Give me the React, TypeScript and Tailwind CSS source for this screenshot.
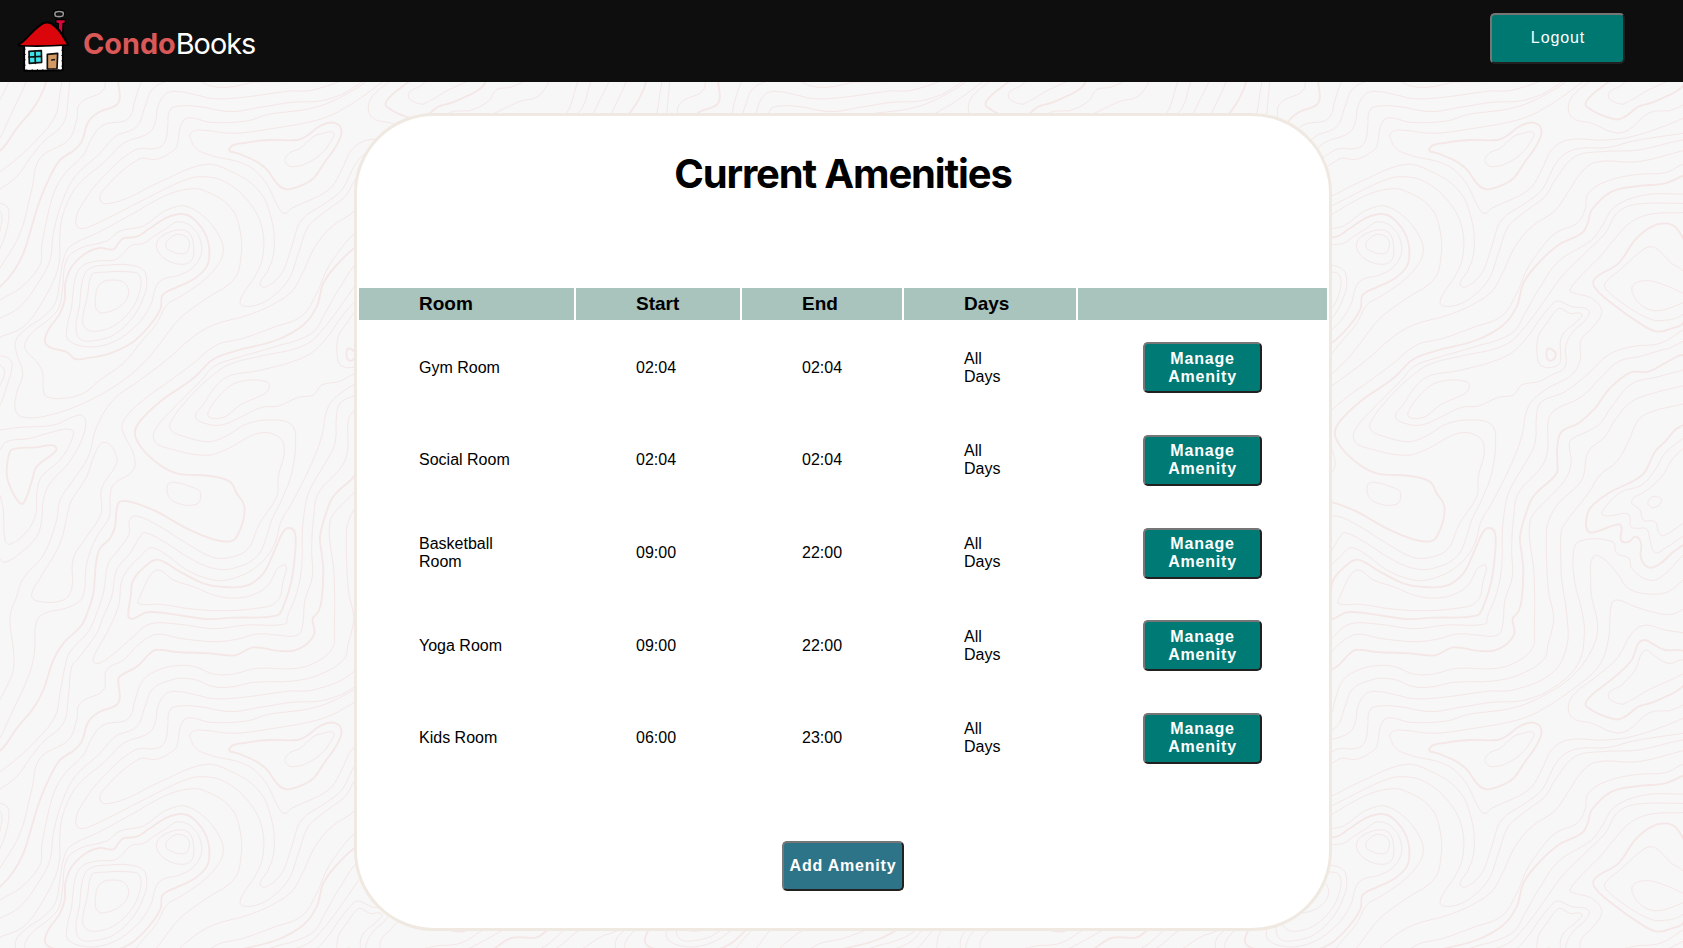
import React from "react";

const TILE = 1800;

// Contour lines of the repeating background tile. "@x,y" moves the origin for the points after it.
const THIN: string[] = [
  "856,235 870,218 900,205 940,170 970,160 1000,158 995,180 965,220 920,250 875,260 858,250 z",
  "497,497 515,470 540,463 565,478 565,510 550,521 520,516 z",
  "470,490 490,465 535,450 565,457 580,490 575,540 545,553 500,540 475,515 z",
  "535,425 500,445 460,470 430,490 395,496 370,520 345,540 290,543 245,560 225,600 215,680 200,750 205,780 260,800 330,790 400,745 450,680 468,620 490,597 545,583 590,550 605,500 580,445 z",
  "440,600 430,570 390,555 330,555 270,565 248,600 238,680 228,740 240,777 280,782 340,765 400,710 435,640 z",
  "420,590 405,577 300,577 275,585 262,650 248,720 260,748 300,752 350,732 400,680 422,620 z",
  "386,640 375,610 340,600 300,612 287,650 292,692 320,697 365,675 z",
  "555,378 600,400 650,455 670,510 650,560 600,610 540,650 500,675 470,730 420,790 370,850 300,900 250,940 190,955 140,950 130,930 128,880 110,845 80,815 75,790 100,755 150,715 178,680 188,620 200,540 240,505 320,483 360,453 430,438 490,395 530,380 z",
  "575,326 620,335 690,380 720,450 722,540 700,600 620,655 540,715 480,790 430,850 350,915 250,970 150,1005 80,1013 48,995 50,940 68,880 50,820 48,780 80,745 130,710 165,670 180,600 190,540 210,500 300,455 400,400 500,345 z",
  // inner hills on the right
  "@375,0 975,500 940,520 890,565 840,610 845,630 900,675 970,715 1010,722 1074,703 1110,640 1074,573 1040,550 1000,510 z",
  "@375,0 965,602 925,615 925,645 955,680 1000,692 1074,668 1090,655 1074,640 1010,612 z",
  "@375,0 975,1255 995,1250 1010,1262 990,1282 970,1275 z",
  // long contours
  "@375,0 1074,870 1000,890 920,912 860,980 820,1035 745,1075 733,1090 738,1150 720,1200 665,1260 620,1310 @0,1260 988,90 990,130 1002,220 1003,400 1000,440 960,480 890,505 770,505 700,522 640,522 590,502 545,496 480,508 430,540 405,600 395,640 375,662 310,675 275,715 250,765 200,815 165,870 140,960 125,1040 120,1095 60,1165 0,1200 -110,1292 -175,1344 -351,1410",
  "@375,0 1074,918 1000,935 920,965 870,1020 840,1070 790,1115 770,1200 700,1270 @375,1260 672,60 664,100 670,270 685,340 685,370 670,430 655,480 580,525 505,543 385,547 325,560 265,560 215,540 175,535 145,538 85,565 60,620 35,680 -30,710 @0,0 300,2020 225,2090 185,2170 160,2260 150,2340 120,2400 60,2480 0,2515 -65,2552 -130,2604 -351,2718",
  "@375,0 1074,972 980,995 940,1020 910,1085 875,1145 825,1185 790,1240 @375,1260 720,70 708,100 708,200 710,240 725,340 725,440 680,520 565,570 495,573 345,593 265,596 215,585 165,575 125,580 100,615 90,670 70,700 -5,730 @0,0 320,2040 230,2120 190,2200 180,2260 175,2360 130,2460 70,2540 0,2572 -50,2604 -351,2772",
  "@375,1260 1074,165 1010,230 970,240 920,205 912,175 875,160 862,125 765,123 745,160 750,250 770,330 778,400 760,490 690,560 600,600 500,607 405,622 315,635 225,620 165,618 135,630 128,680 120,725 95,745 30,750 -65,830 -130,915 -148,965 -135,985 -95,975 55,900 175,842 235,830 305,848 375,910 410,980 415,1060 395,1120 350,1190 350,1215 395,1215 440,1192 490,1140 520,1060 550,980 600,935 660,890 690,840 750,770 830,755 940,750 1074,720 1245,705 1360,639 1397,546 1415,490",
  "@375,1260 1074,240 1030,275 970,282 910,265 880,225 840,180 805,170 797,240 800,290 818,380 800,450 740,530 650,590 560,625 430,643 365,663 255,667 195,653 170,670 155,740 140,755 95,778 40,778 -65,870 -75,900 -55,911 5,895 100,848 235,794 305,808 400,870 440,960 447,1050 430,1110 405,1150 420,1162 470,1120 500,1040 530,960 600,910 650,870 700,780 750,748 850,742 930,722 1074,700 1280,670 1325,639 1358,546 1380,490",
  "@375,1260 1074,328 1040,343 1000,340 930,320 880,300 860,310 850,420 820,500 740,570 640,635 570,662 445,685 325,700 225,690 197,700 200,725 218,750 265,768 365,795 420,845 465,930 480,940 500,925 610,870 650,810 680,750 730,720 840,720 910,712 1000,685 1110,639 1185,604 1235,592 1265,559 1270,546 1275,500",
  "@375,1260 1195,546 1155,562 1115,569 1090,604 1035,632 1020,632 970,640 910,690 870,698 800,670 745,655 730,620 750,580 820,525 880,470 920,400 960,376 1020,390 1074,398",
  "@375,1260 950,460 930,510 890,555 850,585 885,612 910,605 970,570 1074,522 1100,500 1074,480 1030,490 985,465 965,450 z",
  "@375,0 1074,212 940,245 820,245 775,270 730,335 690,392 620,440 570,500 530,585 500,635 440,675 370,705 265,735 205,770 125,840 45,900 -35,960 -85,1040 -110,1130 -155,1200 -195,1260 @0,1260 170,60 130,165 70,235 50,290 30,350 40,450 40,510 20,560 0,598 -20,639 -60,710",
  "@375,0 1074,252 1020,278 940,283 850,302 790,340 780,390 755,430 690,460 645,510 605,570 575,640 530,708 445,742 355,775 275,795 205,850 145,895 55,960 0,1015 -8,1050 25,1120 25,1170 -35,1215 -45,1260 @0,1260 328,50 290,110 260,190 248,290 210,320 130,342 108,370 103,460 85,530 30,650 0,715",
  "@375,0 1074,342 960,345 870,380 830,440 800,480 700,545 640,630 600,700 560,760 450,800 330,835 265,860 230,900 150,980 90,1050 90,1085 130,1105 240,1126 300,1110 400,1060 460,1070 478,1110 460,1190 455,1250 410,1320 @0,1260 770,90 745,145 700,170 640,172 560,130 480,80 410,48 388,60 388,100 355,150 325,190 310,280 290,340 265,395 210,455 195,500 180,580 165,650 100,730 40,785 0,815",
  "@375,0 1074,370 940,372 880,395 840,460 790,510 710,590 660,660 600,740 540,795 400,830 320,850 270,880 200,945 140,1020 138,1050 180,1070 250,1085 300,1070 370,1030 450,1020 500,1035 512,1080 500,1180 470,1260 440,1320 @0,1260 800,110 770,170 700,205 640,205 570,175 500,130 435,98 420,110 390,160 350,210 335,290 310,350 290,400 235,475 215,500 205,590 190,670 130,725 90,775 50,830 0,868",
  "@375,0 1074,398 980,402 920,425 870,475 830,525 780,575 735,630 750,640 800,655 830,695 800,745 768,780 765,840 740,885 660,930 610,980 590,1070 560,1150 500,1270 470,1320 @0,1260 820,140 770,200 700,235 640,240 560,210 500,165 455,143 435,155 370,230 355,320 320,400 280,475 290,491 330,470 400,410 450,372 540,373 640,386 740,375 855,372 862,350 890,280 905,200 907,100 910,60 @375,0 550,1240 600,1150 630,1090 635,1000 650,965 720,935 790,880 850,825 920,800 1005,790 1070,752 1150,700",
  "@375,0 685,670 700,663 740,680 790,690 785,715 740,760 722,800 720,860 680,885 640,905 590,915 565,945 520,952 460,978 410,982 350,1010 290,1035 240,1030 212,1010 230,980 280,910 320,885 400,872 540,830 600,780 650,710 z",
  "@375,0 690,695 705,685 735,700 770,702 760,720 710,770 706,845 690,860 650,858 637,830 640,770 665,730 z",
  "@375,0 340,906 425,905 430,930 400,950 345,975 300,1010 255,1013 250,995 290,940 z",
  "503,1215 525,1207 580,1223 600,1235 598,1265 580,1275 545,1273 510,1255 z",
  "@0,1260 850,195 848,250 830,305 770,325 650,332 560,325 480,313 415,310 420,290 455,220 480,211 520,240 580,260 660,290 740,290 800,260 z",
  "@375,0 1130,752 1095,772 1035,804 1010,810 950,828 880,845 830,890 770,950 690,990 670,1020 668,1110 650,1160 580,1240 565,1320 @0,1260 935,150 937,230 915,300 905,390 885,408 830,405 770,402 710,418 640,425 540,415 470,403 420,430 370,480 320,510 310,570 240,610 230,660 205,720 120,775 95,870 60,1000 0,1105",
  "-30,820 0,827 25,835 37,855 20,920 0,975 -20,1000",
  "-20,845 0,855 14,875 0,915 -20,940",
  "0,1050 60,1042 160,1035 240,1005 257,1025 245,1080 205,1150 150,1210 130,1260 125,1320 110,1370 60,1420 15,1447 0,1438",
  "0,1110 20,1085 90,1075 150,1058 215,1050 215,1080 180,1140 125,1190 110,1240 108,1300 80,1355 30,1393 15,1380 10,1290 0,1245",
  "315,1087 350,1130 345,1160 305,1225 303,1300 260,1370 220,1435 215,1525 190,1560 115,1564 95,1545 120,1495 180,1390 205,1290 215,1260 260,1190 285,1120 z",
  "-20,368 0,370 20,378 27,400 20,450 0,505 -20,530",
  "-10,385 0,393 6,410 0,455",
  "@375,0 1074,1075 1020,1120 990,1170 950,1215 890,1235 850,1270 830,1300 835,1306 860,1307 910,1303 918,1340 940,1345 965,1347 975,1380 990,1417 1020,1405 1074,1368",
  "@375,0 1074,1105 1040,1140 1010,1190 960,1235 920,1263 945,1290 955,1320 990,1325 1000,1355 1015,1367 1074,1330",
];

const THICK: string[] = [
  "688,206 740,188 810,180 890,180 920,168 960,138 1000,128 1024,150 1010,195 975,245 940,295 900,318 860,328 835,315 800,268 770,245 720,222 z",
  "340,508 355,490 370,475 410,470 450,445 500,413 545,402 580,416 615,460 628,510 620,560 580,598 530,622 488,645 482,685 450,735 400,785 330,820 270,833 225,837 200,816 150,802 135,785 145,750 180,700 194,660 196,610 215,560 260,518 300,504 z",
  "@375,0 667,808 680,808 692,822 683,840 668,838 z",
  "@375,0 1074,825 1060,828 1010,855 970,875 915,878 850,930 810,985 760,1030 710,1055 697,1100 697,1150 695,1180 625,1250 600,1310 @0,1260 960,110 965,160 970,210 965,300 955,335 938,357 943,400 920,432 880,452 830,452 760,442 705,466 630,460 530,456 485,450 460,452 410,500 358,530 355,546 355,608 300,635 265,665 245,725 220,752 180,780 150,830 120,900 95,980 70,1060 40,1115 0,1160 -160,1292 -190,1312 -265,1314 -315,1344 -351,1365",
  "@375,0 1074,287 1020,310 940,318 860,335 800,390 788,430 770,460 700,495 635,555 595,610 575,680 535,735 455,780 335,812 265,838 205,895 105,965 40,1030 30,1065 55,1110 105,1155 155,1180 255,1188 315,1205 335,1240 357,1275 355,1320 335,1370 315,1384 265,1378 185,1345 95,1295 25,1268 -15,1265 -25,1290 -30,1340 -45,1375 -75,1405 -87,1450 -95,1540 -110,1590 -130,1635 -185,1690 -215,1740 -245,1830 -275,1885 -325,1945 -355,1990 -375,2013",
  "@0,1260 470,179 440,195 400,240 392,290 385,350 400,356 440,337 500,340 620,357 700,353 830,347 850,320 875,240 886,150 885,100 870,84 850,95 820,160 790,220 740,257 660,260 610,250 540,215 500,190 z",
  "30,1115 50,1105 110,1102 160,1096 168,1112 110,1160 95,1205 70,1270 55,1265 30,1220 20,1180 z",
  "@375,1260 960,420 940,430 920,480 870,530 790,595 785,620 870,658 900,650 940,620 980,608 1060,570 1085,540 1100,480 1074,452 1020,450 980,430 z",
  "@375,0 1020,430 980,440 930,480 880,550 810,595 808,620 860,670 960,740 1000,755 1040,745 1074,730 1130,600 1074,475 1050,440 z",
  "@375,0 1074,1035 1050,1050 1020,1085 990,1115 960,1175 930,1200 850,1240 795,1285 783,1330 790,1355 810,1356 880,1333 890,1345 888,1380 910,1386 932,1370 948,1390 948,1435 970,1462 1000,1455 1040,1420 1074,1395",
];

function smooth(source: string): string {
  const pts: number[][] = [];
  let ox = 0;
  let oy = 0;
  let closed = false;
  for (const token of source.split(" ")) {
    if (token === "z") {
      closed = true;
    } else if (token[0] === "@") {
      [ox, oy] = token.slice(1).split(",").map(Number);
    } else {
      const [x, y] = token.split(",").map(Number);
      pts.push([x + ox, y + oy]);
    }
  }
  const n = pts.length;
  const at = (i: number) => (closed ? pts[(i + n) % n] : pts[Math.max(0, Math.min(n - 1, i))]);
  let d = `M${pts[0][0]} ${pts[0][1]}`;
  for (let i = 0; i < (closed ? n : n - 1); i++) {
    const [p0, p1, p2, p3] = [at(i - 1), at(i), at(i + 1), at(i + 2)];
    // Tangents are limited by the length of the segment, which keeps tight corners free of loops.
    const len = Math.hypot(p2[0] - p1[0], p2[1] - p1[1]);
    const t1 = Math.hypot(p2[0] - p0[0], p2[1] - p0[1]) || 1;
    const t2 = Math.hypot(p3[0] - p1[0], p3[1] - p1[1]) || 1;
    const k = len * 0.37;
    const c1 = [p1[0] + ((p2[0] - p0[0]) / t1) * k, p1[1] + ((p2[1] - p0[1]) / t1) * k];
    const c2 = [p2[0] - ((p3[0] - p1[0]) / t2) * k, p2[1] - ((p3[1] - p1[1]) / t2) * k];
    d += `C${c1[0].toFixed(1)} ${c1[1].toFixed(1)} ${c2[0].toFixed(1)} ${c2[1].toFixed(1)} ${p2[0]} ${p2[1]}`;
  }
  return closed ? d + "Z" : d;
}

const thinPath = THIN.map(smooth).join("");
const thickPath = THICK.map(smooth).join("");

function Topography() {
  const copies: React.ReactElement[] = [];
  for (let i = -1; i <= 3; i++) {
    for (let j = -2; j <= 1; j++) {
      copies.push(<use key={`${i}:${j}`} href="#contours" x={i * TILE} y={j * TILE + 240} />);
    }
  }
  return (
    <svg className="absolute inset-0 -z-10 h-full w-full" viewBox="0 0 5049 2844" preserveAspectRatio="xMinYMin slice" aria-hidden="true">
      <defs>
        <g id="contours" fill="none" stroke="#f4e7e6">
          <path d={thinPath} strokeWidth="3" />
          <path d={thickPath} strokeWidth="5.6" />
        </g>
      </defs>
      {copies}
    </svg>
  );
}

function House() {
  return (
    <svg className="h-[66px] w-[54px]" viewBox="45 24 162 198" strokeLinejoin="round" strokeLinecap="round" aria-hidden="true">
      <path d="M165 36q12-5 24 0q3 6-1 12q-12 5-23 0q-3-6 0-12z" fill="#111" stroke="#000" strokeWidth="10" />
      <path d="M166 37q12-5 23 0q3 6-1 11q-11 4-22 0q-3-6 0-11z" fill="none" stroke="#969696" strokeWidth="5" />
      <path d="M168 59h28v10l-7 2-1 34-13-9 0-25-8-2z" fill="#d9063a" stroke="#000" strokeWidth="4" />
      <path d="M75 134l0 76 111-1 -1-75z" fill="#000" stroke="#000" strokeWidth="10" />
      <path d="M77 134l0 74 107-1 0-73z" fill="#fff" stroke="#fff" strokeWidth="3" strokeDasharray="11 5" />
      <path d="M57 135q12-6 25-20q25-28 46-43q14-8 28 0q20 14 36 43q6 10 11 18q-73 5-146 2z" fill="#000" stroke="#000" strokeWidth="9" />
      <path d="M60 135q11-6 23-20q25-28 45-41q13-7 26 0q20 14 36 42q5 9 11 17q-71 4-141 2z" fill="#da060c" />
      <path d="M87 154l37-2 1 35-37 3z" fill="#3fe3ea" stroke="#111" strokeWidth="5" />
      <path d="M105 153l1 37M87 171l37-2" stroke="#111" strokeWidth="5" />
      <path d="M142 207v-44l31-3-2 47z" fill="#d39a64" stroke="#111" strokeWidth="5" />
      <path d="M155 180l8-1" stroke="#222" strokeWidth="5" />
    </svg>
  );
}

const BUTTON =
  "rounded-[5px] border-2 border-t-[#767676] border-l-[#767676] border-r-[#212121] border-b-[#212121] text-center text-[16px] leading-[18px] text-white";

const COLUMNS = "grid grid-cols-[215px_164px_160px_172px_249px] gap-x-[2px]";

const amenities = [
  { room: "Gym Room", start: "02:04", end: "02:04", days: "All Days" },
  { room: "Social Room", start: "02:04", end: "02:04", days: "All Days" },
  { room: "Basketball Room", start: "09:00", end: "22:00", days: "All Days" },
  { room: "Yoga Room", start: "09:00", end: "22:00", days: "All Days" },
  { room: "Kids Room", start: "06:00", end: "23:00", days: "All Days" },
];

export default function App() {
  return (
    <div className="relative isolate flex h-[948px] w-full flex-col overflow-hidden bg-[#f7f7f7] font-['Liberation_Sans',Arial,sans-serif] text-black">
      <Topography />
      <header className="flex h-[82px] shrink-0 items-start justify-between bg-[#0e0e0e] pr-[58px] pl-[15px]">
        <div className="flex items-start pt-[8px]">
          <House />
          <div className="ml-[14px] pt-[18px] font-['Inter',sans-serif] text-[28.8px] leading-[36px] text-white">
            <span className="font-bold text-[#db5858]">Condo</span>
            <span className="tracking-[-0.95px]">Books</span>
          </div>
        </div>
        <button className={`${BUTTON} mt-[13px] h-[51px] w-[135px] bg-[#007872] pb-[2px] pl-[1px] tracking-[0.9px]`}>Logout</button>
      </header>

      <main className="mt-[31px] ml-[354px] flex h-[818px] w-[978px] shrink-0 flex-col items-center rounded-[80px] border-[3px] border-[#f0e9e1] bg-white">
        <h1 className="mt-[34px] font-['Inter',sans-serif] text-[40px] leading-[48px] font-bold tracking-[-1.15px]">Current Amenities</h1>

        <section className="mt-[90px] w-[968px]">
          <div className={`${COLUMNS} h-[32px] text-[19px] leading-[32px] font-bold`}>
            {["Room", "Start", "End", "Days", ""].map((title) => (
              <div key={title} className="bg-[#a9c4bc] pl-[60px]">
                {title}
              </div>
            ))}
          </div>
          <div className="mt-[1.3px] text-[16px] leading-[18px]">
            {amenities.map((a) => (
              <div key={a.room} className={`${COLUMNS} h-[92.7px] items-center`}>
                <div className="pr-[50px] pl-[60px]">{a.room}</div>
                <div className="pl-[60px]">{a.start}</div>
                <div className="pl-[60px]">{a.end}</div>
                <div className="pr-[60px] pl-[60px]">{a.days}</div>
                <div className="pl-[65px]">
                  <button className={`${BUTTON} block h-[51px] w-[119px] bg-[#007a75] px-[16px] font-bold tracking-[0.8px]`}>Manage Amenity</button>
                </div>
              </div>
            ))}
          </div>
        </section>

        <button className={`${BUTTON} mt-[56.7px] h-[50px] w-[122px] bg-[#2e7488] font-bold tracking-[0.8px] whitespace-nowrap`}>Add Amenity</button>
      </main>
    </div>
  );
}
